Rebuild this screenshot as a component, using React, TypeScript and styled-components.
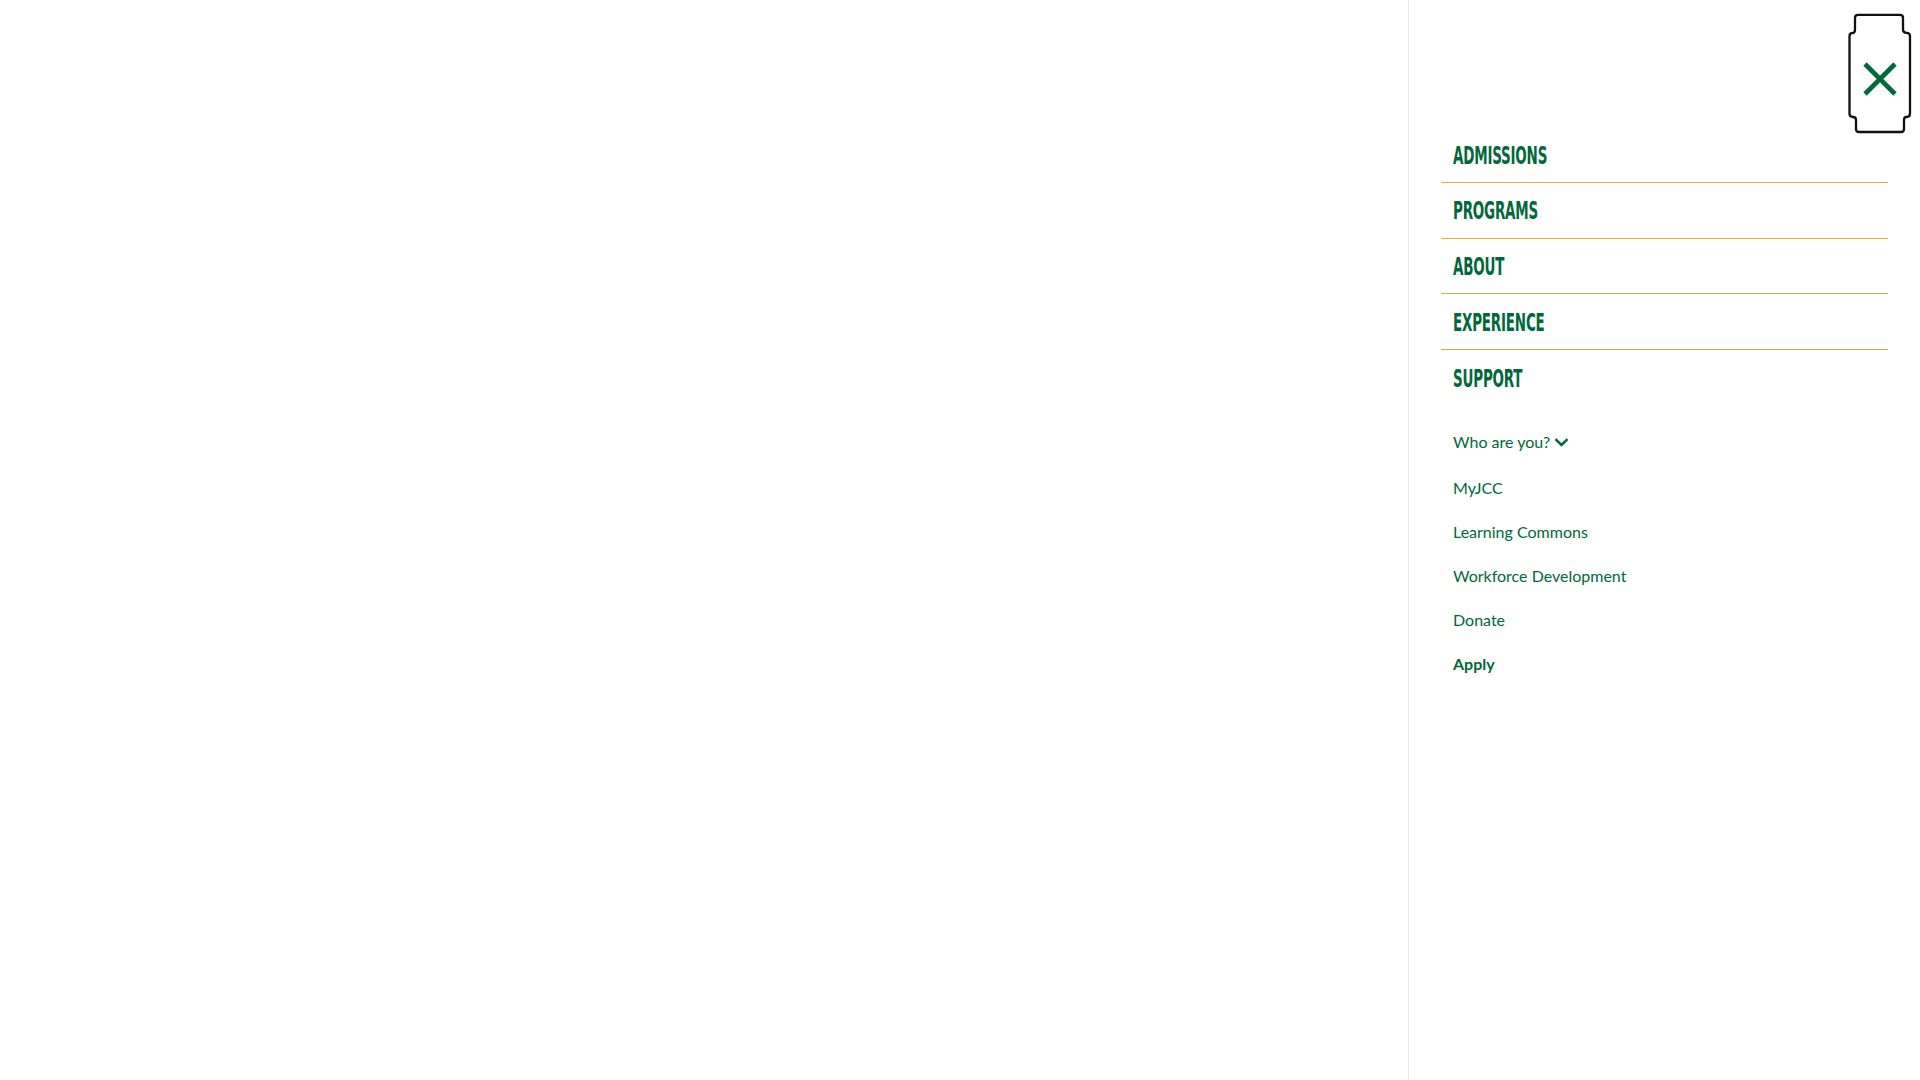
import React from "react";
import styled, { createGlobalStyle } from "styled-components";

const GREEN = "#00683b";
const GOLD = "#e2ac2c";

const Global = createGlobalStyle`
  html, body { margin: 0; padding: 0; background: #fff; }
  body { font-family: Lato, "Noto Sans", sans-serif; }
  * { box-sizing: border-box; }
`;

const Page = styled.div`
  display: flex;
  width: 100%;
  height: 100vh;
  overflow: hidden;
`;

const Backdrop = styled.div`
  flex: 1;
  background: #fff;
`;

const Panel = styled.aside`
  position: relative;
  width: 512px;
  border-left: 1px solid #e8e8e8;
  background: #fff;
  padding: 127.2px 32px 0 32px;
  display: flex;
  flex-direction: column;
`;

const CloseButton = styled.button`
  position: absolute;
  top: 13px;
  right: 8px;
  width: 64px;
  height: 121px;
  padding: 0;
  border: 0;
  background: transparent;
  cursor: pointer;
  display: flex;
  align-items: center;
  justify-content: center;
  svg.frame {
    position: absolute;
    inset: 0;
  }
  svg.cross {
    position: relative;
    margin-top: 11px;
  }
`;

const MainNav = styled.ul`
  list-style: none;
  margin: 0;
  padding: 0;
`;

const MainItem = styled.li<{ $last?: boolean }>`
  height: 55.67px;
  display: flex;
  align-items: center;
  padding: 3px 12px 0 12px;
  border-bottom: ${(p) => (p.$last ? "none" : `1px solid ${GOLD}`)};
`;

const MainLink = styled.a`
  display: inline-block;
  font-family: "Liberation Sans Narrow", "DejaVu Sans Condensed", "Liberation Sans", sans-serif;
  font-weight: 700;
  font-size: 24.5px;
  line-height: 1;
  color: ${GREEN};
  text-transform: uppercase;
  text-decoration: none;
  letter-spacing: -0.3px;
  transform: scaleX(0.61);
  transform-origin: left center;
  white-space: nowrap;
`;

const SubNav = styled.ul`
  list-style: none;
  margin: 25px 0 0 0;
  padding: 0 12px;
  display: flex;
  flex-direction: column;
  gap: 20px;
`;

const SubItem = styled.li<{ $extra?: number }>`
  margin-bottom: ${(p) => p.$extra ?? 0}px;
`;

const SubLink = styled.a<{ $bold?: boolean }>`
  display: inline-flex;
  align-items: center;
  font-family: Lato, "Noto Sans", sans-serif;
  font-size: 16px;
  line-height: 24px;
  font-weight: ${(p) => (p.$bold ? 700 : 400)};
  color: ${GREEN};
  text-decoration: none;
`;

const WhoButton = styled.button`
  display: inline-flex;
  align-items: center;
  gap: 4px;
  padding: 0;
  border: 0;
  background: transparent;
  font-family: Lato, "Noto Sans", sans-serif;
  font-size: 16px;
  line-height: 24px;
  color: ${GREEN};
  cursor: pointer;
`;

const mainItems = ["Admissions", "Programs", "About", "Experience", "Support"];
const subItems = [
  { label: "MyJCC" },
  { label: "Learning Commons" },
  { label: "Workforce Development" },
  { label: "Donate" },
  { label: "Apply", bold: true },
];

export default function App() {
  return (
    <>
      <Global />
      <Page>
        <Backdrop />
        <Panel>
          <CloseButton aria-label="Close menu">
            <svg className="frame" width="64" height="121" viewBox="0 0 64 121" fill="none">
              <path
                d="M10 1.8 H52 Q55 1.8 55 4.8 V16.5 Q55 19.8 58.5 19.8 Q62 19.8 62 23.3 V100.5 Q62 104 58.5 104 Q56 104 56 107 V116 Q56 119 53 119 H11 Q8 119 8 116 V107 Q8 104 5 104 Q1.5 104 1.5 100.5 V23.3 Q1.5 19.8 5 19.8 Q7 19.8 7 16.5 V4.8 Q7 1.8 10 1.8 Z"
                stroke="#111"
                strokeWidth="2.3"
                strokeLinejoin="round"
              />
            </svg>
            <svg className="cross" width="36" height="36" viewBox="0 0 36 36">
              <path d="M3 3 L33 33 M33 3 L3 33" stroke={GREEN} strokeWidth="4.6" />
            </svg>
          </CloseButton>
          <nav>
            <MainNav>
              {mainItems.map((m, i) => (
                <MainItem key={m} $last={i === mainItems.length - 1}>
                  <MainLink href="#">{m}</MainLink>
                </MainItem>
              ))}
            </MainNav>
            <SubNav>
              <SubItem $extra={2}>
                <WhoButton>
                  Who are you?
                  <svg width="15" height="10" viewBox="0 0 15 10">
                    <path d="M1.5 2.2 L7.5 8 L13.5 2.2" stroke={GREEN} strokeWidth="2.5" fill="none" />
                  </svg>
                </WhoButton>
              </SubItem>
              {subItems.map((s) => (
                <SubItem key={s.label}>
                  <SubLink href="#" $bold={s.bold}>{s.label}</SubLink>
                </SubItem>
              ))}
            </SubNav>
          </nav>
        </Panel>
      </Page>
    </>
  );
}
